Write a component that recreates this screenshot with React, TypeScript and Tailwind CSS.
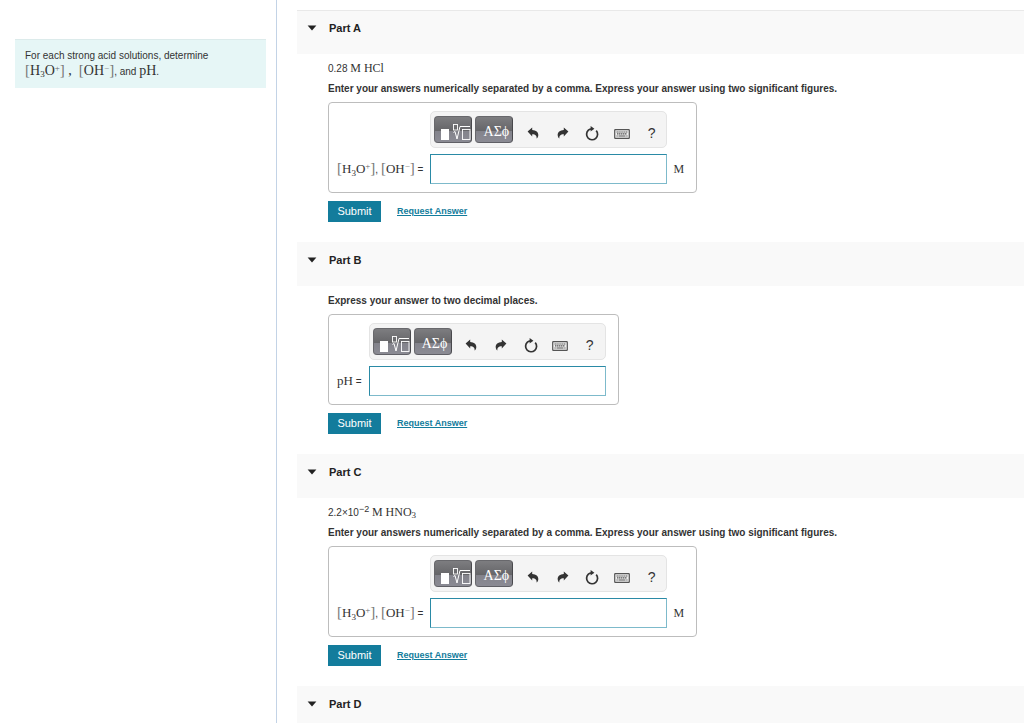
import { useState } from 'react'
import type { ReactNode } from 'react'

type Part = {
  id: string
  title: string
  given?: ReactNode
  prompt?: string
  label?: ReactNode
  unit?: string
}

function Serif({ children }: { children: ReactNode }) {
  return <span className="font-['Liberation_Serif',serif] text-[12px] leading-none">{children}</span>
}

// Takes its size from the parent, so the same formula works in the intro and in the labels
function Formula({ children }: { children: ReactNode }) {
  return <span className="font-['Liberation_Serif',serif] leading-none">{children}</span>
}

function Bracket({ children }: { children: ReactNode }) {
  return <span className="font-['Liberation_Serif',serif] text-[15px] leading-none text-[#777]">{children}</span>
}

// Hydronium concentration, [H3O+]
function Hydronium() {
  return (
    <>
      <Bracket>[</Bracket>
      <Formula>H<sub className="text-[9px]">3</sub>O<sup className="text-[9px] text-[#666]">+</sup></Formula>
      <Bracket>]</Bracket>
    </>
  )
}

// Hydroxide concentration, [OH-]
function Hydroxide() {
  return (
    <>
      <Bracket>[</Bracket>
      <Formula>OH<sup className="text-[9px] text-[#888]">−</sup></Formula>
      <Bracket>]</Bracket>
    </>
  )
}

const concentrations = (
  <>
    <Hydronium /><span className="text-[10px]">, </span><Hydroxide /><span className="text-[10px]"> =</span>
  </>
)

const PARTS: Part[] = [
  {
    id: 'a',
    title: 'Part A',
    given: <>0.28 <Serif>M HCl</Serif></>,
    prompt: 'Enter your answers numerically separated by a comma. Express your answer using two significant figures.',
    label: concentrations,
    unit: 'M',
  },
  {
    id: 'b',
    title: 'Part B',
    prompt: 'Express your answer to two decimal places.',
    label: <><Formula>pH</Formula><span className="text-[10px]"> =</span></>,
  },
  {
    id: 'c',
    title: 'Part C',
    given: <>2.2×10<sup className="text-[9px]">−2</sup> <Serif>M HNO<sub className="text-[9px]">3</sub></Serif></>,
    prompt: 'Enter your answers numerically separated by a comma. Express your answer using two significant figures.',
    label: concentrations,
    unit: 'M',
  },
  { id: 'd', title: 'Part D' },
]

function TemplatesIcon() {
  return (
    <svg width="36" height="25" viewBox="0 0 36 25" fill="none" stroke="#fff">
      <rect x="6" y="12" width="8" height="11" fill="#fff" stroke="none" />
      <rect x="18.500" y="7.500" width="4" height="5.500" strokeWidth=".9" />
      <path d="M18.500 15.500l1.500-1 2 7.500L25 9.500h10" />
      <rect x="27.500" y="12.500" width="7.500" height="10" strokeWidth=".9" />
    </svg>
  )
}

function ArrowIcon({ flip = false }: { flip?: boolean }) {
  return (
    <svg width="12" height="12" viewBox="0 0 12 12" fill="#333" className={flip ? '-scale-x-100' : ''}>
      <path d="M.6 4.600L5.200.6v2.300c3.800.1 6.300 2.200 6.100 5.300-.1 1.400-.7 2.500-1.700 3.400.3-2.600-.9-4.200-4.400-4.300v2.200z" />
    </svg>
  )
}

function ResetIcon() {
  return (
    <svg width="14" height="15" viewBox="0 0 14 15" fill="none" stroke="#333" strokeWidth="1.700">
      <path d="M11.200 4.600A5.500 5.500 0 1 1 3.400 4.200c.9-.8 2-1.300 3.200-1.300" />
      <path d="M5.600.1l3.800 2.600-3.800 2.800z" fill="#333" stroke="none" />
    </svg>
  )
}

function KeyboardIcon() {
  return (
    <svg width="16" height="10" viewBox="0 0 16 10" fill="none" stroke="#555" className="translate-y-px">
      <rect x=".7" y=".7" width="14.600" height="8.600" rx=".6" fill="#eee" strokeWidth="1.200" />
      <path d="M2.500 3h11M3 4.900h10" strokeDasharray="1.400 .5" strokeWidth="1.100" />
      <path d="M2.500 7h1.200M4.500 7h7M12.300 7h1.200" strokeWidth="1.100" />
    </svg>
  )
}

const darkButton =
  'h-[27px] w-[38px] rounded-[4px] border border-[#68686c] border-r-[#48484c] border-b-[#606066] bg-[linear-gradient(#7d7d80_0%,#666669_54%,#83838b_56%,#8b8b94_100%)] text-white'
const iconButton = 'h-5 flex-1 flex items-center justify-center'

function Toolbar() {
  return (
    <div className="flex h-[37px] items-end gap-[3px] rounded-[5px] border border-[#e4e4e4] bg-[#f4f4f4] py-1 pl-[3px]">
      <button type="button" aria-label="Templates" className={`${darkButton} overflow-hidden`}>
        <TemplatesIcon />
      </button>
      <button type="button" aria-label="Symbols" className={`${darkButton} pt-1 pl-1 font-['Liberation_Serif',serif] text-[14px] leading-5`}>
        ΑΣϕ
      </button>
      <div className="flex flex-1 pl-0.5">
        <button type="button" aria-label="Undo" className={iconButton}><ArrowIcon /></button>
        <button type="button" aria-label="Redo" className={iconButton}><ArrowIcon flip /></button>
        <button type="button" aria-label="Reset" className={iconButton}><ResetIcon /></button>
        <button type="button" aria-label="Keyboard shortcuts" className={iconButton}><KeyboardIcon /></button>
        <button type="button" aria-label="Help" className={`${iconButton} text-[14px]`}>?</button>
      </div>
    </div>
  )
}

function AnswerForm({ part }: { part: Part }) {
  const [value, setValue] = useState('')
  const inputId = `answer-${part.id}`

  return (
    <form onSubmit={e => e.preventDefault()}>
      <div className="inline-grid grid-cols-[auto_237px_auto] items-center gap-y-1.5 rounded-[4px] border border-[#bdbdbd] py-2 pr-3 pl-2 align-top">
        <div className="col-start-2"><Toolbar /></div>
        <label htmlFor={inputId} className="col-start-1 pr-[7px] text-[13px] whitespace-nowrap">{part.label}</label>
        <input
          id={inputId}
          type="text"
          value={value}
          onChange={e => setValue(e.target.value)}
          className="h-[30px] w-full border border-[#7dbacb] border-t-[#2a8aa6] border-l-[#2a8aa6] bg-white px-2 text-[12px] outline-none"
        />
        {part.unit && <span className="pl-1.5"><Serif>{part.unit}</Serif></span>}
      </div>
      <div className="mt-2 flex items-center gap-4">
        <button type="submit" className="h-[21px] w-[53px] bg-[#137c9c] text-[11px] text-white">Submit</button>
        <a href="#" className="text-[9px] font-bold text-[#137c9c] underline">Request Answer</a>
      </div>
    </form>
  )
}

function PartSection({ part }: { part: Part }) {
  const [open, setOpen] = useState(true)

  return (
    <section className="group">
      <h2>
        <button
          type="button"
          aria-expanded={open}
          onClick={() => setOpen(!open)}
          className="flex h-11 w-full items-start gap-3 border-t border-[#f9f9f9] bg-[#f9f9f9] pt-[7px] pl-2.5 text-left text-[11px] leading-5 font-bold text-[#222] group-first:border-[#e9e9e9]"
        >
          <svg width="10" height="20" viewBox="0 0 10 20" fill="#222" className={open ? '' : '-rotate-90'}>
            <path d="M.6 7.600h8.800L5 12.400z" />
          </svg>
          {part.title}
        </button>
      </h2>
      {open && part.prompt && (
        <div className="pt-[5px] pb-5 pl-[31px]">
          {part.given && <p className="leading-5">{part.given}</p>}
          <p className="mb-[3px] leading-5 font-bold">{part.prompt}</p>
          <AnswerForm part={part} />
        </div>
      )}
    </section>
  )
}

export default function App() {
  return (
    <div className="flex h-screen overflow-hidden bg-white font-['Liberation_Sans',Arial,sans-serif] text-[10px] text-[#333]">
      <aside className="w-[277px] shrink-0 border-r border-[#c3d3e6] pt-[39px] pr-2.5 pl-[15px]">
        <div className="border-t border-[#dcebeb] bg-[#e6f6f6] px-2.5 pt-2 pb-2.5">
          <p className="leading-[15px]">For each strong acid solutions, determine</p>
          <p className="text-[14px] leading-3">
            <Hydronium /><Formula> ,&nbsp; </Formula><Hydroxide />
            <span className="text-[10px]">, and </span><Formula>pH</Formula><span className="text-[10px]">.</span>
          </p>
        </div>
      </aside>
      <main className="min-w-0 flex-1 overflow-hidden pt-2.5 pl-5">
        {PARTS.map(part => <PartSection key={part.id} part={part} />)}
      </main>
    </div>
  )
}
